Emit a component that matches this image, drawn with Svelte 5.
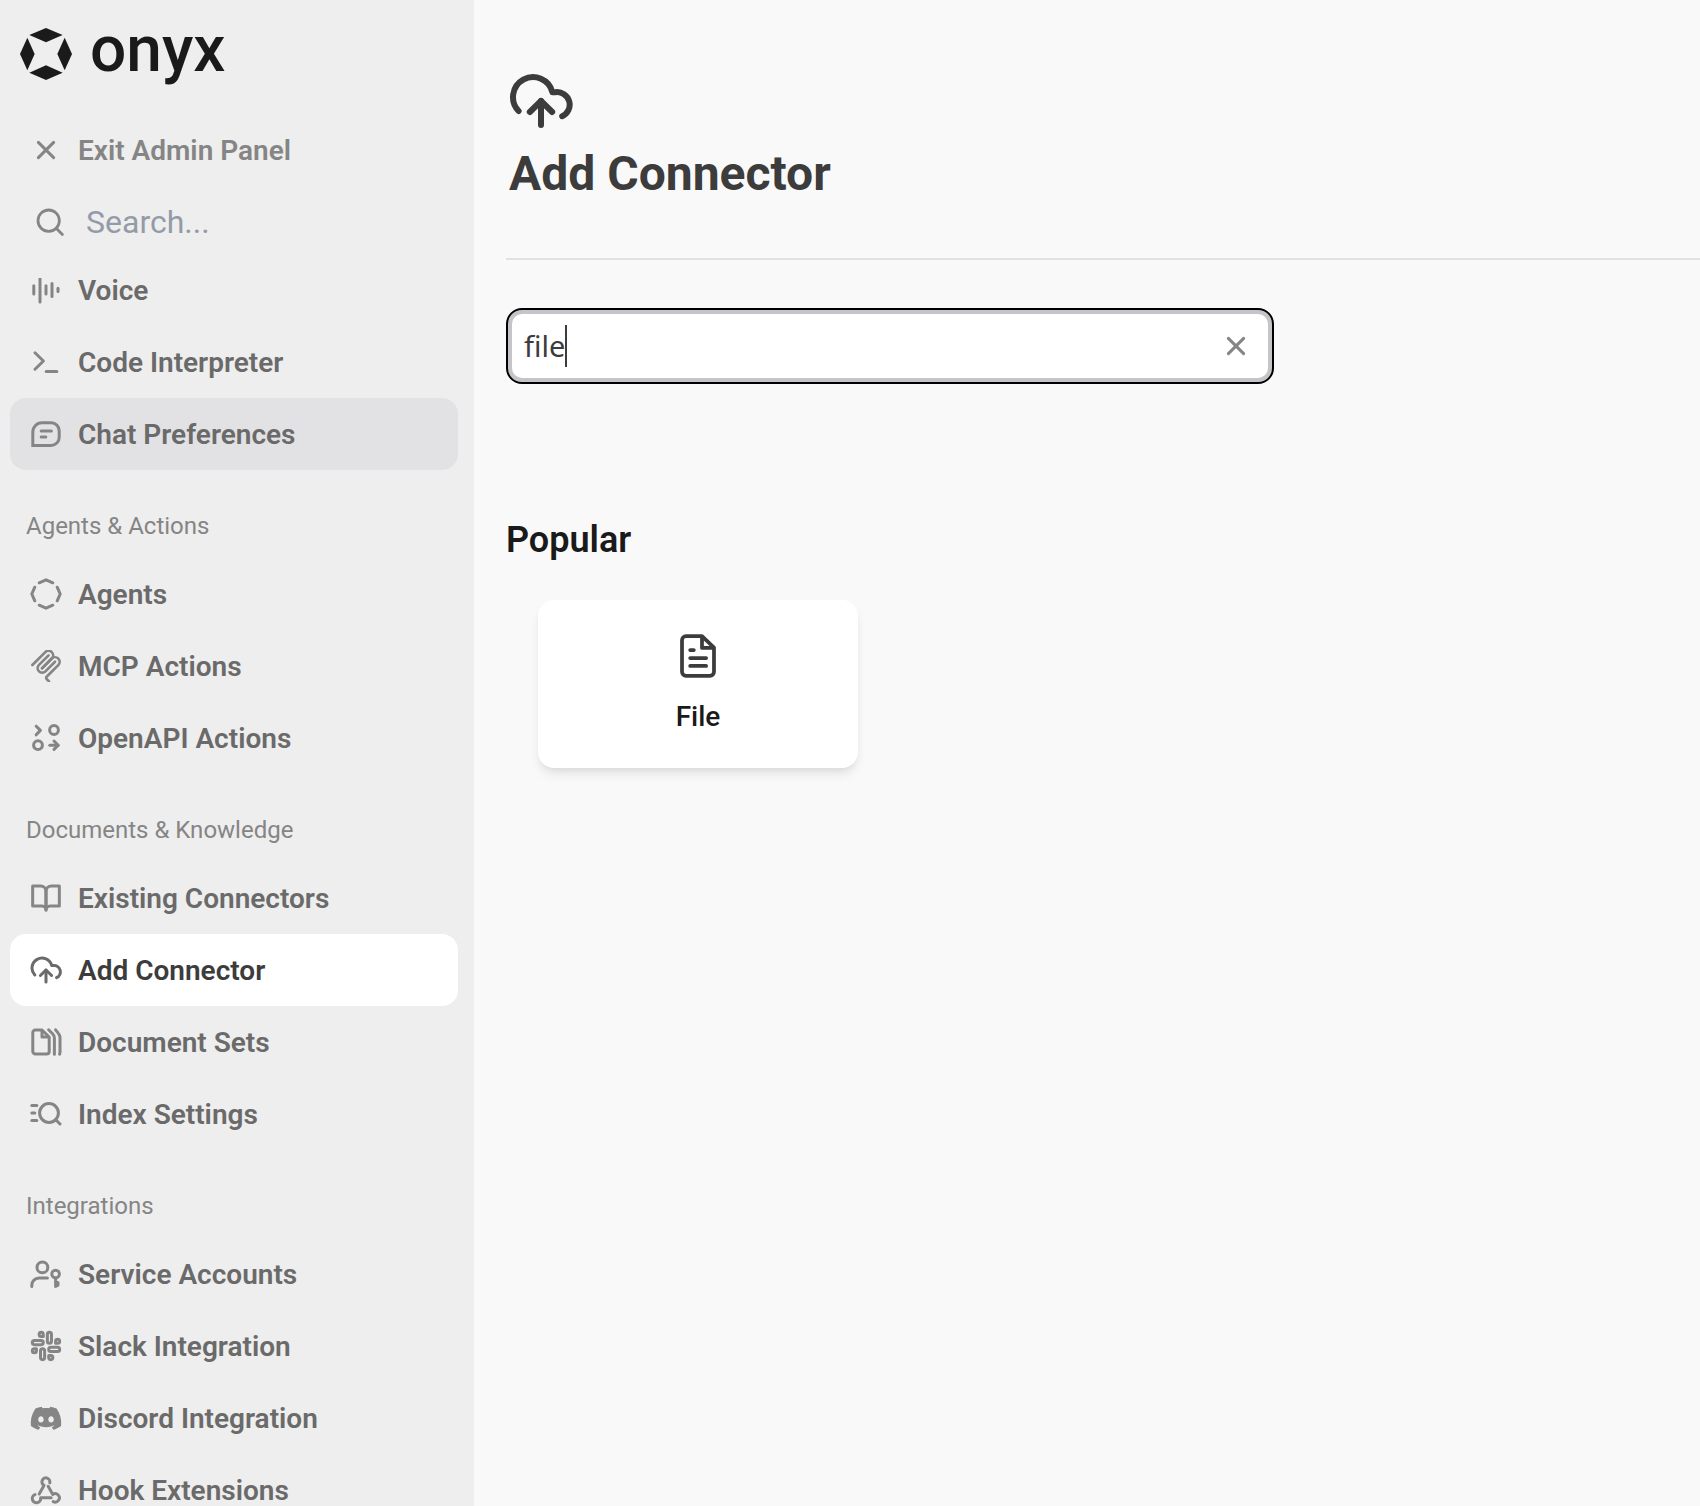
<script>
  let navQuery = $state('');
  let query = $state('file');

  const icons = {
    close: { d: ['M4.2 4.2l7.6 7.6', 'M11.8 4.2l-7.6 7.6'] },
    search: { d: ['M12.67 7.33A5.33 5.33 0 1 1 2 7.33a5.33 5.33 0 0 1 10.67 0Z', 'M14.2 14.2L11.1 11.1'], width: 1.4 },
    voice: { d: ['M1.9 5.9V10', 'M5 2V14', 'M8 5.9V10', 'M11 4.7V11.2', 'M14 7.1V8.8'] },
    terminal: { d: ['M2.5 3.4l4.2 4.1-4.2 4.1', 'M8.1 12.7h5.3'] },
    chat: {
      d: [
        'M1.4 13.7V7A4.6 4.6 0 0 1 6 2.4h4.6a4 4 0 0 1 4 4v3.3a4 4 0 0 1-4 4Z',
        'M5.6 6.5h5.1',
        'M5.6 9.5h2.3'
      ],
      miter: true
    },
    agents: {
      d: [
        'M4.6 2.4L8 .9l3.4 1.5',
        'M13.6 4.6L15.1 8l-1.5 3.4',
        'M11.4 13.6L8 15.1l-3.4-1.5',
        'M2.4 11.4L.9 8l1.5-3.4'
      ]
    },
    mcp: {
      d: [
        'M18 84.85L85.88 16.97c9.37-9.37 24.57-9.37 33.94 0s9.37 24.57 0 33.94L68.56 102.18',
        'M69.27 101.47L119.82 50.91c9.38-9.37 24.57-9.37 33.95 0l.35.36c9.37 9.37 9.37 24.56 0 33.94L92.72 146.6c-3.12 3.12-3.12 8.19 0 11.31l12.61 12.61',
        'M102.85 33.94L52.65 84.15c-9.37 9.37-9.37 24.56 0 33.94s24.57 9.37 33.94 0l50.2-50.21'
      ],
      box: '5.5 6 168 168',
      width: 14
    },
    openapi: {
      d: [
        'M3.1 2.1l2.1 2.1-2.1 2.2',
        'M14.2 4a2.2 2.2 0 1 1-4.4 0 2.2 2.2 0 0 1 4.4 0Z',
        'M6.2 11.6a2.2 2.2 0 1 1-4.4 0 2.2 2.2 0 0 1 4.4 0Z',
        'M9.9 11.6H14',
        'M12 9.5l2.1 2.1-2.1 2.1'
      ]
    },
    book: {
      d: [
        'M1.33 2h4A2.67 2.67 0 0 1 8 4.67V14a2 2 0 0 0-2-2H1.33Z',
        'M14.67 2h-4A2.67 2.67 0 0 0 8 4.67V14a2 2 0 0 1 2-2h4.67Z'
      ]
    },
    cloud: {
      d: [
        'M2.4 10.5A5 5 0 1 1 10.85 5.8H11.6a3.15 3.15 0 0 1 1.7 6',
        'M5.2 10.75L8 8l2.8 2.75',
        'M8 8v6'
      ]
    },
    docs: {
      d: [
        'M6 2H2.7a1.3 1.3 0 0 0-1.3 1.3v9.4A1.3 1.3 0 0 0 2.7 14h5.6a1.3 1.3 0 0 0 1.3-1.3V5.5L6 2v3.5h3.6',
        'M9.3 1.9l2 2a3 3 0 0 1 .9 2.1v8.1',
        'M12.8 1.9l1.4 1.8a3 3 0 0 1 .8 2v7a4 4 0 0 1-.2 1.4'
      ]
    },
    index: {
      d: [
        'M.9 3.8h2.5',
        'M.9 7.5h1.5',
        'M.9 11.2h2.5',
        'M14.2 7.5a4.7 4.7 0 1 1-9.4 0 4.7 4.7 0 0 1 9.4 0Z',
        'M15 13l-2.1-2.1'
      ]
    },
    account: {
      d: [
        'M8.9 4.7a2.7 2.7 0 1 1-5.4 0 2.7 2.7 0 0 1 5.4 0Z',
        'M.9 14.2v-.6A3.6 3.6 0 0 1 4.5 10h4.2',
        'M14.7 8a1.9 1.9 0 1 1-3.8 0 1.9 1.9 0 0 1 3.8 0Z',
        'M12.8 10v4.2l1.2-.6v-1.4h-1'
      ]
    },
    slack: {
      d: [
        'M14.5 10c-.83 0-1.5-.67-1.5-1.5v-5c0-.83.67-1.5 1.5-1.5s1.5.67 1.5 1.5v5c0 .83-.67 1.5-1.5 1.5z',
        'M20.5 10H19V8.5c0-.83.67-1.5 1.5-1.5s1.5.67 1.5 1.5-.67 1.5-1.5 1.5z',
        'M9.5 14c.83 0 1.5.67 1.5 1.5v5c0 .83-.67 1.5-1.5 1.5S8 21.33 8 20.5v-5c0-.83.67-1.5 1.5-1.5z',
        'M3.5 14H5v1.5c0 .83-.67 1.5-1.5 1.5S2 16.33 2 15.5 2.67 14 3.5 14z',
        'M14 14.5c0-.83.67-1.5 1.5-1.5h5c.83 0 1.5.67 1.5 1.5s-.67 1.5-1.5 1.5h-5c-.83 0-1.5-.67-1.5-1.5z',
        'M15.5 19H14v1.5c0 .83.67 1.5 1.5 1.5s1.5-.67 1.5-1.5-.67-1.5-1.5-1.5z',
        'M10 9.5C10 8.67 9.33 8 8.5 8h-5C2.67 8 2 8.67 2 9.5S2.67 11 3.5 11h5c.83 0 1.5-.67 1.5-1.5z',
        'M8.5 5H10V3.5C10 2.67 9.33 2 8.5 2S7 2.67 7 3.5 7.67 5 8.5 5z'
      ],
      box: '0.3 0.3 23.4 23.4',
      width: 2.2
    },
    discord: {
      d: [
        'M20.317 4.37a19.79 19.79 0 00-4.885-1.515.074.074 0 00-.079.037c-.21.375-.444.865-.608 1.25-1.845-.277-3.68-.277-5.487 0-.163-.394-.406-.875-.618-1.25a.077.077 0 00-.078-.037 19.736 19.736 0 00-4.885 1.515.07.07 0 00-.033.028C.533 9.046-.319 13.58.1 18.058a.082.082 0 00.031.056c2.053 1.508 4.041 2.423 5.993 3.03a.078.078 0 00.084-.028c.462-.63.873-1.295 1.226-1.994a.076.076 0 00-.042-.106c-.652-.248-1.274-.55-1.872-.892a.077.077 0 01-.008-.128c.126-.094.252-.192.372-.291a.074.074 0 01.078-.01c3.928 1.793 8.18 1.793 12.061 0a.074.074 0 01.079.009c.12.099.246.198.373.292a.077.077 0 01-.007.128 12.3 12.3 0 01-1.873.891.077.077 0 00-.04.107c.36.698.771 1.363 1.225 1.993a.076.076 0 00.084.029c1.961-.607 3.95-1.522 6.002-3.03a.077.077 0 00.032-.055c.5-5.177-.838-9.674-3.549-13.66a.061.061 0 00-.031-.029zM8.02 15.331c-1.182 0-2.157-1.086-2.157-2.419 0-1.333.956-2.419 2.157-2.419 1.211 0 2.176 1.095 2.157 2.419 0 1.333-.956 2.419-2.157 2.419zm7.975 0c-1.183 0-2.157-1.086-2.157-2.419 0-1.333.955-2.419 2.157-2.419 1.21 0 2.176 1.095 2.157 2.419 0 1.333-.946 2.419-2.157 2.419z'
      ],
      box: '-.6 -.8 25.2 25.2',
      solid: true
    },
    hook: {
      d: [
        'M9.9 4.4A2 2 0 1 0 7 5.7L4.6 10',
        'M9.1 6.1l2.3 4.1A2.1 2.1 0 1 1 11.6 13.8',
        'M10.6 11.9H5.3A2.1 2.1 0 1 1 2.5 10.3'
      ]
    },
    file: {
      d: [
        'M9.33 1.4H4a1.33 1.33 0 0 0-1.33 1.33v10.54A1.33 1.33 0 0 0 4 14.6h8a1.33 1.33 0 0 0 1.33-1.33V5.2L9.33 1.4v3.9h4',
        'M5.4 6h1.2',
        'M5.4 8.67h5.3',
        'M5.4 11.33h5.3'
      ],
      width: 1.25
    }
  };

  const sections = [
    {
      title: '',
      items: [
        { icon: 'voice', label: 'Voice' },
        { icon: 'terminal', label: 'Code Interpreter' },
        { icon: 'chat', label: 'Chat Preferences', hovered: true }
      ]
    },
    {
      title: 'Agents & Actions',
      items: [
        { icon: 'agents', label: 'Agents' },
        { icon: 'mcp', label: 'MCP Actions' },
        { icon: 'openapi', label: 'OpenAPI Actions' }
      ]
    },
    {
      title: 'Documents & Knowledge',
      items: [
        { icon: 'book', label: 'Existing Connectors' },
        { icon: 'cloud', label: 'Add Connector', active: true },
        { icon: 'docs', label: 'Document Sets' },
        { icon: 'index', label: 'Index Settings' }
      ]
    },
    {
      title: 'Integrations',
      items: [
        { icon: 'account', label: 'Service Accounts' },
        { icon: 'slack', label: 'Slack Integration' },
        { icon: 'discord', label: 'Discord Integration' },
        { icon: 'hook', label: 'Hook Extensions' }
      ]
    }
  ];
</script>

{#snippet icon(name)}
  {@const glyph = icons[name]}
  <svg
    class="icon"
    viewBox={glyph.box ?? '0 0 16 16'}
    fill={glyph.solid ? 'currentColor' : 'none'}
    stroke={glyph.solid ? 'none' : 'currentColor'}
    stroke-width={glyph.width ?? 1.5}
    stroke-linecap="round"
    stroke-linejoin={glyph.miter ? 'miter' : 'round'}
    aria-hidden="true"
  >
    {#each glyph.d as d}<path {d} />{/each}
  </svg>
{/snippet}

<div class="app">
  <aside class="sidebar">
    <a class="brand" href="#home">
      <svg class="mark" viewBox="60 84 156 156" fill="currentColor" aria-hidden="true">
        <path d="M138 84l50 21-50 22-50-22Z" />
        <path d="M138 196l50 22-50 22-50-22Z" />
        <path d="M82 113l22 49-22 49-22-49Z" />
        <path d="M194 113l22 49-22 49-22-49Z" />
      </svg>
      <span class="wordmark">onyx</span>
    </a>

    <a class="row exit" href="#exit">{@render icon('close')}<span>Exit Admin Panel</span></a>

    <label class="nav-search">
      {@render icon('search')}
      <input type="text" placeholder="Search..." aria-label="Search" bind:value={navQuery} />
    </label>

    <nav class="scroller">
      <div class="list">
        {#each sections as section}
          <section>
            {#if section.title}<h2 class="section-title">{section.title}</h2>{/if}
            {#each section.items as item}
              <a
                class="row"
                class:hovered={item.hovered}
                class:active={item.active}
                aria-current={item.active ? 'page' : undefined}
                href="#{item.icon}">{@render icon(item.icon)}<span>{item.label}</span></a
              >
            {/each}
          </section>
        {/each}
      </div>
    </nav>
  </aside>

  <main class="content">
    <header class="page-header">
      <div class="page-icon">{@render icon('cloud')}</div>
      <h1>Add Connector</h1>
    </header>

    <div class="search-box">
      <label class="field">
        <input type="text" aria-label="Search connectors" bind:value={query} />
        <span class="caret"></span>
      </label>
      <button class="clear" type="button" aria-label="Clear" onclick={() => (query = '')}>
        {@render icon('close')}
      </button>
    </div>

    <h2 class="group-title">Popular</h2>
    <div class="cards">
      <a class="card" href="#file">{@render icon('file')}<span>File</span></a>
    </div>
  </main>
</div>

<style>
  :global(body) {
    margin: 0;
  }
  .app {
    display: flex;
    height: 100vh;
    overflow: hidden;
    background: #f9f9f9;
    color: #1a1a1a;
    font-family: Roboto, 'Liberation Sans', sans-serif;
  }
  .app * {
    box-sizing: border-box;
  }
  a {
    color: inherit;
    text-decoration: none;
  }
  input,
  button {
    padding: 0;
    border: 0;
    background: none;
    font: inherit;
    outline: none;
  }
  h1,
  h2 {
    margin: 0;
  }
  .icon {
    flex: none;
    width: 32px;
    height: 32px;
    color: #858585;
  }

  .sidebar {
    display: flex;
    flex: none;
    flex-direction: column;
    width: 474px;
    padding: 28px 16px 0 10px;
    background: #eeeeee;
  }
  .brand {
    display: flex;
    align-items: center;
    gap: 18px;
    height: 52px;
    margin-bottom: 34px;
    padding-left: 10px;
  }
  .mark {
    width: 52px;
    height: 52px;
  }
  .wordmark {
    padding-bottom: 8px;
    font-size: 64px;
    font-weight: 500;
    line-height: 64px;
  }
  .row {
    display: flex;
    flex: none;
    align-items: center;
    gap: 16px;
    height: 72px;
    padding: 0 20px;
    border-radius: 16px;
    color: #6a6a6a;
    font-size: 28px;
    font-weight: 600;
    line-height: 40px;
    white-space: nowrap;
  }
  .row span {
    padding-top: 2px;
  }
  .exit {
    color: #858585;
  }
  .hovered {
    background: #e2e2e4;
  }
  .active {
    background: #ffffff;
    color: #3c3c3c;
  }
  .active .icon {
    color: #6a6a6a;
  }
  .nav-search {
    display: flex;
    flex: none;
    align-items: center;
    gap: 20px;
    height: 72px;
    margin-bottom: 20px;
    padding: 0 24px;
    font-size: 32px;
  }
  .nav-search input {
    flex: 1;
    min-width: 0;
    color: #3c3c3c;
  }
  .nav-search input::placeholder {
    color: #949ba8;
    opacity: 1;
  }
  .scroller {
    flex: 1;
    min-height: 0;
    overflow: hidden;
  }
  .list {
    margin-top: -24px;
  }
  .section-title {
    padding: 40px 16px 16px;
    color: #858585;
    font-size: 24px;
    font-weight: 400;
    line-height: 32px;
  }

  .content {
    flex: 1;
    min-width: 0;
    padding: 69px 0 0 32px;
  }
  .page-header {
    padding: 0 3px 53px;
    border-bottom: 2px solid #e2e2e2;
  }
  .page-icon {
    height: 64px;
  }
  .page-icon .icon {
    width: 64px;
    height: 64px;
    color: #3c3c3c;
  }
  h1 {
    padding-top: 10px;
    color: #3c3c3c;
    font-size: 48px;
    font-weight: 700;
    line-height: 62px;
  }
  .search-box {
    display: flex;
    align-items: center;
    width: 100%;
    max-width: 768px;
    height: 76px;
    margin: 48px 0 128px;
    padding: 0 16px 0 12px;
    border: 2px solid #000000;
    border-radius: 16px;
    background: #ffffff;
    box-shadow: inset 0 0 0 4px #c5c4c8;
  }
  .field {
    display: flex;
    flex: 1;
    align-items: center;
    padding-left: 4px;
    color: #3c3c3c;
    font-family: 'Noto Sans', sans-serif;
    font-size: 29px;
    line-height: 42px;
    cursor: text;
  }
  .field input {
    max-width: 600px;
    field-sizing: content;
    caret-color: transparent;
    color: inherit;
  }
  .caret {
    width: 2px;
    height: 42px;
    background: #3c3c3c;
  }
  .clear {
    display: flex;
    padding: 4px;
  }
  .group-title {
    font-size: 36px;
    font-weight: 600;
    line-height: 56px;
  }
  .cards {
    display: flex;
    flex-wrap: wrap;
    gap: 32px;
    padding: 32px;
  }
  .card {
    display: flex;
    flex-direction: column;
    align-items: center;
    gap: 16px;
    width: 320px;
    height: 168px;
    padding-top: 32px;
    border-radius: 16px;
    background: #ffffff;
    box-shadow:
      0 8px 12px -2px rgb(0 0 0 / 8%),
      0 4px 8px -4px rgb(0 0 0 / 10%);
    font-size: 28px;
    font-weight: 500;
    line-height: 42px;
  }
  .card .icon {
    width: 48px;
    height: 48px;
    color: #3c3c3c;
  }
</style>
